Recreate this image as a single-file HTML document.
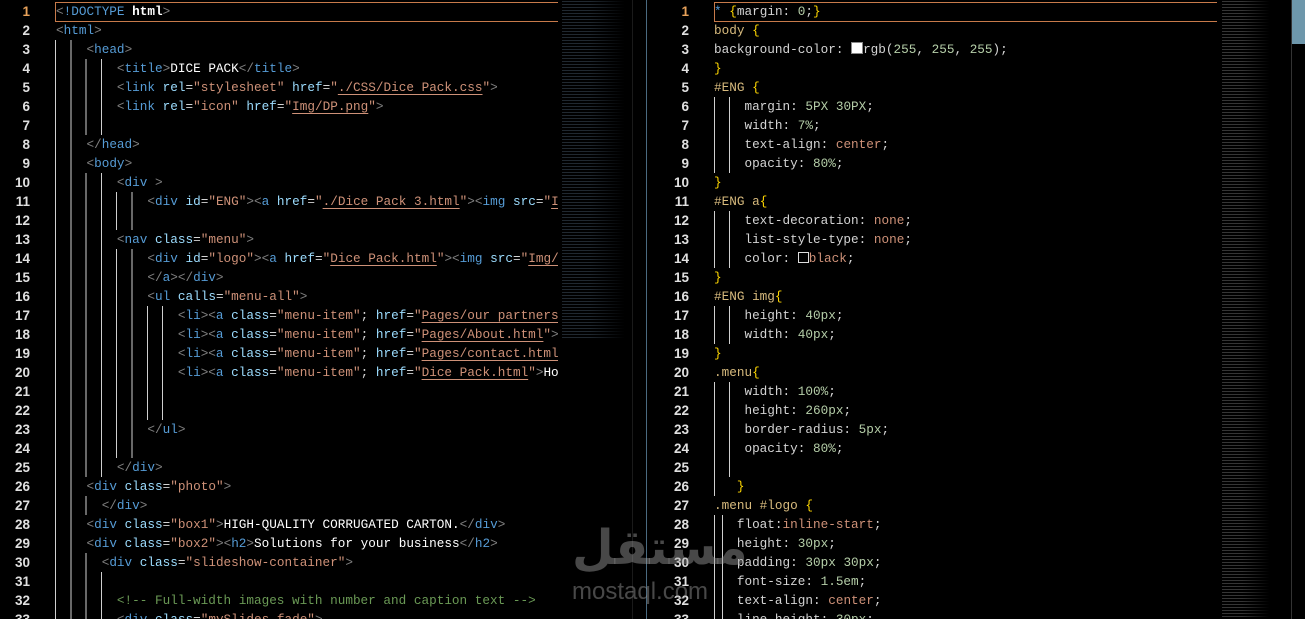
<!DOCTYPE html>
<html><head><meta charset="utf-8"><style>
*{margin:0;padding:0}
body{width:1305px;height:619px;background:#000;overflow:hidden;position:relative;font-family:"Liberation Mono",monospace;font-size:12.7px;color:#d4d4d4}
.pane{position:absolute;top:0;height:619px;overflow:hidden}
.ln{position:absolute;height:19px;line-height:19px;white-space:pre}
.num{position:absolute;width:40px;text-align:right;height:19px;line-height:19px;color:#e0e0e0;font-weight:bold;font-family:"Liberation Sans",sans-serif;font-size:13.5px}
.t{color:#808080}.n{color:#569cd6}.a{color:#9cdcfe}.s{color:#ce9178}.u{color:#ce9178;text-decoration:underline;text-underline-offset:3px}.w{color:#fff}.c{color:#6a9955}
.sel{color:#d7ba7d}.b{color:#ffd700}.p{color:#d4d4d4}.v{color:#ce9178}.k{color:#b5cea8}
.g{position:absolute;width:1px;background:#cfcfcf}
.gg{position:absolute;left:55px;background:repeating-linear-gradient(90deg,#cfcfcf 0 1px,transparent 1px 15.3px)}
</style></head><body>

<!-- LEFT PANE -->
<div class="pane" style="left:0;width:558px">
<div style="position:absolute;left:55px;top:2px;width:520px;height:18px;border:1px solid #c77a4a"></div>
<div class="num" style="left:-10px;top:2px;color:#e8a25a">1</div>
<div class="num" style="left:-10px;top:21px">2</div>
<div class="num" style="left:-10px;top:40px">3</div>
<div class="num" style="left:-10px;top:59px">4</div>
<div class="num" style="left:-10px;top:78px">5</div>
<div class="num" style="left:-10px;top:97px">6</div>
<div class="num" style="left:-10px;top:116px">7</div>
<div class="num" style="left:-10px;top:135px">8</div>
<div class="num" style="left:-10px;top:154px">9</div>
<div class="num" style="left:-10px;top:173px">10</div>
<div class="num" style="left:-10px;top:192px">11</div>
<div class="num" style="left:-10px;top:211px">12</div>
<div class="num" style="left:-10px;top:230px">13</div>
<div class="num" style="left:-10px;top:249px">14</div>
<div class="num" style="left:-10px;top:268px">15</div>
<div class="num" style="left:-10px;top:287px">16</div>
<div class="num" style="left:-10px;top:306px">17</div>
<div class="num" style="left:-10px;top:325px">18</div>
<div class="num" style="left:-10px;top:344px">19</div>
<div class="num" style="left:-10px;top:363px">20</div>
<div class="num" style="left:-10px;top:382px">21</div>
<div class="num" style="left:-10px;top:401px">22</div>
<div class="num" style="left:-10px;top:420px">23</div>
<div class="num" style="left:-10px;top:439px">24</div>
<div class="num" style="left:-10px;top:458px">25</div>
<div class="num" style="left:-10px;top:477px">26</div>
<div class="num" style="left:-10px;top:496px">27</div>
<div class="num" style="left:-10px;top:515px">28</div>
<div class="num" style="left:-10px;top:534px">29</div>
<div class="num" style="left:-10px;top:553px">30</div>
<div class="num" style="left:-10px;top:572px">31</div>
<div class="num" style="left:-10px;top:591px">32</div>
<div class="num" style="left:-10px;top:610px">33</div>

<div class="gg" style="top:40px;height:19px;width:30px"></div>
<div class="gg" style="top:59px;height:76px;width:61px"></div>
<div class="gg" style="top:135px;height:38px;width:30px"></div>
<div class="gg" style="top:173px;height:19px;width:61px"></div>
<div class="gg" style="top:192px;height:38px;width:91px"></div>
<div class="gg" style="top:230px;height:19px;width:61px"></div>
<div class="gg" style="top:249px;height:57px;width:91px"></div>
<div class="gg" style="top:306px;height:114px;width:122px"></div>
<div class="gg" style="top:420px;height:38px;width:91px"></div>
<div class="gg" style="top:458px;height:19px;width:61px"></div>
<div class="gg" style="top:477px;height:19px;width:30px"></div>
<div class="gg" style="top:496px;height:19px;width:45px"></div>
<div class="gg" style="top:515px;height:38px;width:30px"></div>
<div class="gg" style="top:553px;height:19px;width:45px"></div>
<div class="gg" style="top:572px;height:47px;width:61px"></div>

<div class="ln" style="left:56px;top:2px"><span class="t">&lt;</span><span class="n">!DOCTYPE</span> <span class="w" style="font-weight:bold">html</span><span class="t">&gt;</span></div>
<div class="ln" style="left:56px;top:21px"><span class="t">&lt;</span><span class="n">html</span><span class="t">&gt;</span></div>
<div class="ln" style="left:56px;top:40px">    <span class="t">&lt;</span><span class="n">head</span><span class="t">&gt;</span></div>
<div class="ln" style="left:56px;top:59px">        <span class="t">&lt;</span><span class="n">title</span><span class="t">&gt;</span><span class="w">DICE PACK</span><span class="t">&lt;/</span><span class="n">title</span><span class="t">&gt;</span></div>
<div class="ln" style="left:56px;top:78px">        <span class="t">&lt;</span><span class="n">link</span> <span class="a">rel</span>=<span class="s">"stylesheet"</span> <span class="a">href</span>=<span class="s">"</span><span class="u">./CSS/Dice Pack.css</span><span class="s">"</span><span class="t">&gt;</span></div>
<div class="ln" style="left:56px;top:97px">        <span class="t">&lt;</span><span class="n">link</span> <span class="a">rel</span>=<span class="s">"icon"</span> <span class="a">href</span>=<span class="s">"</span><span class="u">Img/DP.png</span><span class="s">"</span><span class="t">&gt;</span></div>
<div class="ln" style="left:56px;top:135px">    <span class="t">&lt;/</span><span class="n">head</span><span class="t">&gt;</span></div>
<div class="ln" style="left:56px;top:154px">    <span class="t">&lt;</span><span class="n">body</span><span class="t">&gt;</span></div>
<div class="ln" style="left:56px;top:173px">        <span class="t">&lt;</span><span class="n">div</span> <span class="t">&gt;</span></div>
<div class="ln" style="left:56px;top:192px">            <span class="t">&lt;</span><span class="n">div</span> <span class="a">id</span>=<span class="s">"ENG"</span><span class="t">&gt;&lt;</span><span class="n">a</span> <span class="a">href</span>=<span class="s">"</span><span class="u">./Dice Pack 3.html</span><span class="s">"</span><span class="t">&gt;&lt;</span><span class="n">img</span> <span class="a">src</span>=<span class="s">"</span><span class="u">Img</span></div>
<div class="ln" style="left:56px;top:230px">        <span class="t">&lt;</span><span class="n">nav</span> <span class="a">class</span>=<span class="s">"menu"</span><span class="t">&gt;</span></div>
<div class="ln" style="left:56px;top:249px">            <span class="t">&lt;</span><span class="n">div</span> <span class="a">id</span>=<span class="s">"logo"</span><span class="t">&gt;&lt;</span><span class="n">a</span> <span class="a">href</span>=<span class="s">"</span><span class="u">Dice Pack.html</span><span class="s">"</span><span class="t">&gt;&lt;</span><span class="n">img</span> <span class="a">src</span>=<span class="s">"</span><span class="u">Img/DP</span></div>
<div class="ln" style="left:56px;top:268px">            <span class="t">&lt;/</span><span class="n">a</span><span class="t">&gt;&lt;/</span><span class="n">div</span><span class="t">&gt;</span></div>
<div class="ln" style="left:56px;top:287px">            <span class="t">&lt;</span><span class="n">ul</span> <span class="a">calls</span>=<span class="s">"menu-all"</span><span class="t">&gt;</span></div>
<div class="ln" style="left:56px;top:306px">                <span class="t">&lt;</span><span class="n">li</span><span class="t">&gt;&lt;</span><span class="n">a</span> <span class="a">class</span>=<span class="s">"menu-item"</span>; <span class="a">href</span>=<span class="s">"</span><span class="u">Pages/our partners.html</span></div>
<div class="ln" style="left:56px;top:325px">                <span class="t">&lt;</span><span class="n">li</span><span class="t">&gt;&lt;</span><span class="n">a</span> <span class="a">class</span>=<span class="s">"menu-item"</span>; <span class="a">href</span>=<span class="s">"</span><span class="u">Pages/About.html</span><span class="s">"</span><span class="t">&gt;</span></div>
<div class="ln" style="left:56px;top:344px">                <span class="t">&lt;</span><span class="n">li</span><span class="t">&gt;&lt;</span><span class="n">a</span> <span class="a">class</span>=<span class="s">"menu-item"</span>; <span class="a">href</span>=<span class="s">"</span><span class="u">Pages/contact.html</span></div>
<div class="ln" style="left:56px;top:363px">                <span class="t">&lt;</span><span class="n">li</span><span class="t">&gt;&lt;</span><span class="n">a</span> <span class="a">class</span>=<span class="s">"menu-item"</span>; <span class="a">href</span>=<span class="s">"</span><span class="u">Dice Pack.html</span><span class="s">"</span><span class="t">&gt;</span><span class="w">Home</span></div>
<div class="ln" style="left:56px;top:420px">            <span class="t">&lt;/</span><span class="n">ul</span><span class="t">&gt;</span></div>
<div class="ln" style="left:56px;top:458px">        <span class="t">&lt;/</span><span class="n">div</span><span class="t">&gt;</span></div>
<div class="ln" style="left:56px;top:477px">    <span class="t">&lt;</span><span class="n">div</span> <span class="a">class</span>=<span class="s">"photo"</span><span class="t">&gt;</span></div>
<div class="ln" style="left:56px;top:496px">      <span class="t">&lt;/</span><span class="n">div</span><span class="t">&gt;</span></div>
<div class="ln" style="left:56px;top:515px">    <span class="t">&lt;</span><span class="n">div</span> <span class="a">class</span>=<span class="s">"box1"</span><span class="t">&gt;</span><span class="w">HIGH-QUALITY CORRUGATED CARTON.</span><span class="t">&lt;/</span><span class="n">div</span><span class="t">&gt;</span></div>
<div class="ln" style="left:56px;top:534px">    <span class="t">&lt;</span><span class="n">div</span> <span class="a">class</span>=<span class="s">"box2"</span><span class="t">&gt;&lt;</span><span class="n">h2</span><span class="t">&gt;</span><span class="w">Solutions for your business</span><span class="t">&lt;/</span><span class="n">h2</span><span class="t">&gt;</span></div>
<div class="ln" style="left:56px;top:553px">      <span class="t">&lt;</span><span class="n">div</span> <span class="a">class</span>=<span class="s">"slideshow-container"</span><span class="t">&gt;</span></div>
<div class="ln" style="left:56px;top:591px">        <span class="c">&lt;!-- Full-width images with number and caption text --&gt;</span></div>
<div class="ln" style="left:56px;top:610px">        <span class="t">&lt;</span><span class="n">div</span> <span class="a">class</span>=<span class="s">"mySlides fade"</span><span class="t">&gt;</span></div>
</div>

<!-- left minimap -->
<div style="position:absolute;left:562px;top:0;width:70px;height:340px;opacity:.3;background:repeating-linear-gradient(180deg,transparent 0 1px,#6a86a0 1px 2px,transparent 2px 3px);-webkit-mask:linear-gradient(90deg,#000 40%,transparent 90%)"></div>
<div style="position:absolute;left:632px;top:0;width:1px;height:619px;background:#1a1a1a"></div>
<div style="position:absolute;left:646px;top:0;width:1px;height:619px;background:#4a6a80"></div>

<!-- RIGHT PANE -->
<div class="pane" style="left:647px;width:570px">
<div style="position:absolute;left:67px;top:2px;width:520px;height:18px;border:1px solid #c77a4a"></div>
<div class="num" style="left:2px;top:2px;color:#e8a25a">1</div>
<div class="num" style="left:2px;top:21px">2</div>
<div class="num" style="left:2px;top:40px">3</div>
<div class="num" style="left:2px;top:59px">4</div>
<div class="num" style="left:2px;top:78px">5</div>
<div class="num" style="left:2px;top:97px">6</div>
<div class="num" style="left:2px;top:116px">7</div>
<div class="num" style="left:2px;top:135px">8</div>
<div class="num" style="left:2px;top:154px">9</div>
<div class="num" style="left:2px;top:173px">10</div>
<div class="num" style="left:2px;top:192px">11</div>
<div class="num" style="left:2px;top:211px">12</div>
<div class="num" style="left:2px;top:230px">13</div>
<div class="num" style="left:2px;top:249px">14</div>
<div class="num" style="left:2px;top:268px">15</div>
<div class="num" style="left:2px;top:287px">16</div>
<div class="num" style="left:2px;top:306px">17</div>
<div class="num" style="left:2px;top:325px">18</div>
<div class="num" style="left:2px;top:344px">19</div>
<div class="num" style="left:2px;top:363px">20</div>
<div class="num" style="left:2px;top:382px">21</div>
<div class="num" style="left:2px;top:401px">22</div>
<div class="num" style="left:2px;top:420px">23</div>
<div class="num" style="left:2px;top:439px">24</div>
<div class="num" style="left:2px;top:458px">25</div>
<div class="num" style="left:2px;top:477px">26</div>
<div class="num" style="left:2px;top:496px">27</div>
<div class="num" style="left:2px;top:515px">28</div>
<div class="num" style="left:2px;top:534px">29</div>
<div class="num" style="left:2px;top:553px">30</div>
<div class="num" style="left:2px;top:572px">31</div>
<div class="num" style="left:2px;top:591px">32</div>
<div class="num" style="left:2px;top:610px">33</div>

<div class="g" style="left:67px;top:97px;height:76px"></div><div class="g" style="left:82px;top:97px;height:76px"></div>
<div class="g" style="left:67px;top:211px;height:57px"></div><div class="g" style="left:82px;top:211px;height:57px"></div>
<div class="g" style="left:67px;top:306px;height:38px"></div><div class="g" style="left:82px;top:306px;height:38px"></div>
<div class="g" style="left:67px;top:382px;height:114px"></div><div class="g" style="left:82px;top:382px;height:95px"></div>
<div class="g" style="left:67px;top:515px;height:104px"></div><div class="g" style="left:75px;top:515px;height:104px"></div>

<div class="ln" style="left:67px;top:2px"><span class="n">*</span> <span class="b">{</span>margin: <span class="k">0</span>;<span class="b">}</span></div>
<div class="ln" style="left:67px;top:21px"><span class="sel">body</span> <span class="b">{</span></div>
<div class="ln" style="left:67px;top:40px">background-color: <span style="display:inline-block;width:10px;height:10px;background:#fff;border:1px solid #888;vertical-align:-1px"></span>rgb(<span class="k">255</span>, <span class="k">255</span>, <span class="k">255</span>);</div>
<div class="ln" style="left:67px;top:59px"><span class="b">}</span></div>
<div class="ln" style="left:67px;top:78px"><span class="sel">#ENG</span> <span class="b">{</span></div>
<div class="ln" style="left:67px;top:97px">    margin: <span class="k">5PX 30PX</span>;</div>
<div class="ln" style="left:67px;top:116px">    width: <span class="k">7%</span>;</div>
<div class="ln" style="left:67px;top:135px">    text-align: <span class="v">center</span>;</div>
<div class="ln" style="left:67px;top:154px">    opacity: <span class="k">80%</span>;</div>
<div class="ln" style="left:67px;top:173px"><span class="b">}</span></div>
<div class="ln" style="left:67px;top:192px"><span class="sel">#ENG a</span><span class="b">{</span></div>
<div class="ln" style="left:67px;top:211px">    text-decoration: <span class="v">none</span>;</div>
<div class="ln" style="left:67px;top:230px">    list-style-type: <span class="v">none</span>;</div>
<div class="ln" style="left:67px;top:249px">    color: <span style="display:inline-block;width:9px;height:9px;background:#000;border:1px solid #ddd;vertical-align:-1px"></span><span class="v">black</span>;</div>
<div class="ln" style="left:67px;top:268px"><span class="b">}</span></div>
<div class="ln" style="left:67px;top:287px"><span class="sel">#ENG img</span><span class="b">{</span></div>
<div class="ln" style="left:67px;top:306px">    height: <span class="k">40px</span>;</div>
<div class="ln" style="left:67px;top:325px">    width: <span class="k">40px</span>;</div>
<div class="ln" style="left:67px;top:344px"><span class="b">}</span></div>
<div class="ln" style="left:67px;top:363px"><span class="sel">.menu</span><span class="b">{</span></div>
<div class="ln" style="left:67px;top:382px">    width: <span class="k">100%</span>;</div>
<div class="ln" style="left:67px;top:401px">    height: <span class="k">260px</span>;</div>
<div class="ln" style="left:67px;top:420px">    border-radius: <span class="k">5px</span>;</div>
<div class="ln" style="left:67px;top:439px">    opacity: <span class="k">80%</span>;</div>
<div class="ln" style="left:67px;top:477px">   <span class="b">}</span></div>
<div class="ln" style="left:67px;top:496px"><span class="sel">.menu #logo</span> <span class="b">{</span></div>
<div class="ln" style="left:67px;top:515px">   float:<span class="v">inline-start</span>;</div>
<div class="ln" style="left:67px;top:534px">   height: <span class="k">30px</span>;</div>
<div class="ln" style="left:67px;top:553px">   padding: <span class="k">30px 30px</span>;</div>
<div class="ln" style="left:67px;top:572px">   font-size: <span class="k">1.5em</span>;</div>
<div class="ln" style="left:67px;top:591px">   text-align: <span class="v">center</span>;</div>
<div class="ln" style="left:67px;top:610px">   line-height: <span class="k">30px</span>;</div>
</div>

<!-- right minimap -->
<div style="position:absolute;left:1222px;top:0;width:68px;height:619px;opacity:.3;background:repeating-linear-gradient(180deg,transparent 0 1px,#b0b0b0 1px 2px,transparent 2px 3px);-webkit-mask:linear-gradient(90deg,#000 30%,transparent 70%)"></div>
<div style="position:absolute;left:1291px;top:0;width:1px;height:619px;background:#333"></div>
<div style="position:absolute;left:1292px;top:0;width:13px;height:44px;background:#6e97ab"></div>

<!-- watermark -->
<div style="position:absolute;left:572px;top:520px;font-family:'DejaVu Sans',sans-serif;font-size:48px;font-weight:bold;color:rgba(160,160,160,.45);line-height:56px">مستقل</div>
<div style="position:absolute;left:572px;top:578px;font-family:'Liberation Sans',sans-serif;font-size:24px;color:rgba(160,160,160,.45);line-height:28px">mostaql.com</div>
</body></html>
